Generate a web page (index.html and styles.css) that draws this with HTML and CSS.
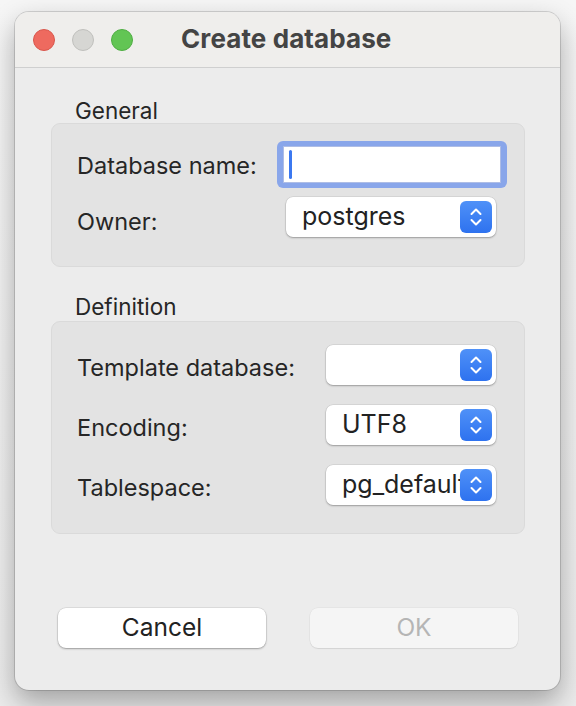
FILE: index.html
```html
<!DOCTYPE html>
<html>
<head>
<meta charset="utf-8">
<link rel="stylesheet" href="styles.css">
</head>
<body>
<div class="window">
  <div class="titlebar">
    <div class="lights">
      <span class="light red"></span>
      <span class="light grey"></span>
      <span class="light green"></span>
    </div>
    <div class="title">Create database</div>
  </div>
  <div class="content">
    <div class="section-label">General</div>
    <div class="group group-general">
      <div class="row row-name">
        <span class="label">Database name:</span>
        <div class="focus-ring"><div class="field"><span class="caret"></span></div></div>
      </div>
      <div class="row row-owner">
        <span class="label">Owner:</span>
        <div class="popup wide"><span class="value">postgres</span><span class="stepper"><svg width="32" height="32" viewBox="0 0 32 32"><path d="M11.5 13 L16 8.5 L20.5 13" fill="none" stroke="#fff" stroke-width="2" stroke-linecap="round" stroke-linejoin="round"/><path d="M11.5 19 L16 23.5 L20.5 19" fill="none" stroke="#fff" stroke-width="2" stroke-linecap="round" stroke-linejoin="round"/></svg></span></div>
      </div>
    </div>
    <div class="section-label second">Definition</div>
    <div class="group group-def">
      <div class="row">
        <span class="label">Template database:</span>
        <div class="popup narrow"><span class="value"></span><span class="stepper"><svg width="32" height="32" viewBox="0 0 32 32"><path d="M11.5 13 L16 8.5 L20.5 13" fill="none" stroke="#fff" stroke-width="2" stroke-linecap="round" stroke-linejoin="round"/><path d="M11.5 19 L16 23.5 L20.5 19" fill="none" stroke="#fff" stroke-width="2" stroke-linecap="round" stroke-linejoin="round"/></svg></span></div>
      </div>
      <div class="row">
        <span class="label">Encoding:</span>
        <div class="popup narrow"><span class="value">UTF8</span><span class="stepper"><svg width="32" height="32" viewBox="0 0 32 32"><path d="M11.5 13 L16 8.5 L20.5 13" fill="none" stroke="#fff" stroke-width="2" stroke-linecap="round" stroke-linejoin="round"/><path d="M11.5 19 L16 23.5 L20.5 19" fill="none" stroke="#fff" stroke-width="2" stroke-linecap="round" stroke-linejoin="round"/></svg></span></div>
      </div>
      <div class="row">
        <span class="label">Tablespace:</span>
        <div class="popup narrow"><span class="value">pg_default</span><span class="stepper"><svg width="32" height="32" viewBox="0 0 32 32"><path d="M11.5 13 L16 8.5 L20.5 13" fill="none" stroke="#fff" stroke-width="2" stroke-linecap="round" stroke-linejoin="round"/><path d="M11.5 19 L16 23.5 L20.5 19" fill="none" stroke="#fff" stroke-width="2" stroke-linecap="round" stroke-linejoin="round"/></svg></span></div>
      </div>
    </div>
    <div class="buttons">
      <div class="btn cancel">Cancel</div>
      <div class="btn ok">OK</div>
    </div>
  </div>
</div>
</body>
</html>
```
FILE: styles.css
```css
html, body {
  margin: 0;
  padding: 0;
}
body {
  width: 576px;
  height: 706px;
  overflow: hidden;
  background: linear-gradient(#f6f6f6, #ececec);
  font-family: Inter, "Open Sans", "Liberation Sans", sans-serif;
  color: #262626;
}
.window {
  margin: 12px 0 0 15px;
  width: 545px;
  height: 678px;
  background: #ececec;
  border-radius: 14px;
  box-shadow: 0 0 0 1px rgba(0,0,0,0.14), 0 12px 28px rgba(0,0,0,0.32);
  overflow: hidden;
  display: flex;
  flex-direction: column;
}
.titlebar {
  height: 55px;
  background: #efeeec;
  border-bottom: 1px solid #cfcfcf;
  display: flex;
  align-items: center;
}
.lights {
  display: flex;
  gap: 17px;
  margin-left: 18px;
  margin-top: 1px;
}
.light {
  width: 22px;
  height: 22px;
  border-radius: 50%;
  box-sizing: border-box;
}
.red { background: #ee6a5f; border: 1px solid #d9564c; }
.grey { background: #d6d6d3; border: 1px solid #c0c0bd; }
.green { background: #62c554; border: 1px solid #4fae43; }
.title {
  margin-left: 48px;
  font-size: 26px;
  line-height: 30px;
  font-weight: 700;
  color: #444;
  letter-spacing: 0.1px;
  margin-top: -2px;
}
.content {
  padding: 30px 35px 0 36px;
  display: flex;
  flex-direction: column;
}
.section-label {
  font-size: 22.5px;
  line-height: 25px;
  margin-left: 24px;
  color: #262626;
}
.section-label.second {
  margin-top: 27px;
  margin-bottom: 2px;
}
.group {
  background: #e3e3e3;
  border: 1px solid #dadada;
  border-radius: 9px;
  box-sizing: border-box;
  padding: 0 28px 0 25px;
  display: flex;
  flex-direction: column;
}
.group-general {
  height: 144px;
  padding-top: 17px;
  gap: 9px;
}
.group-def {
  height: 213px;
  padding-top: 23px;
  gap: 20px;
}
.group-def .label {
  padding-top: 6px;
}
.row {
  display: flex;
  align-items: center;
  justify-content: space-between;
}
.label {
  font-size: 23.5px;
  line-height: 28px;
  color: #262626;
  white-space: nowrap;
}
.row-name .label { padding-top: 3px; }
.row-owner .label { padding-top: 10px; }
.focus-ring {
  width: 230px;
  height: 47px;
  box-sizing: border-box;
  padding: 5px 6px;
  background: #89a6ea;
  border-radius: 6px;
  margin-right: -11px;
}
.field {
  background: #fff;
  height: 37px;
  box-sizing: border-box;
  border: 1px solid #aebde6;
  display: flex;
  align-items: center;
  padding-left: 5px;
}
.caret {
  width: 3px;
  height: 29px;
  background: #3b78f0;
  border-radius: 2px;
}
.popup {
  height: 40px;
  background: #fff;
  border-radius: 7px;
  box-shadow: 0 0 0 0.5px rgba(0,0,0,0.1), 0 1px 2px rgba(0,0,0,0.28);
  display: flex;
  align-items: center;
  box-sizing: border-box;
  padding-left: 16px;
  padding-right: 4px;
}
.popup.wide { width: 210px; }
.popup.narrow { width: 170px; }
.value {
  flex: 1;
  min-width: 0;
  font-size: 25px;
  line-height: 30px;
  color: #222;
  white-space: nowrap;
  overflow: hidden;
  margin-top: -3px;
}
.stepper {
  width: 32px;
  height: 32px;
  flex: none;
  border-radius: 6px;
  background: linear-gradient(#4f91f8, #2e72ef);
  display: flex;
}
.buttons {
  margin-top: 74px;
  display: flex;
  justify-content: space-between;
  padding: 0 7px 0 7px;
}
.btn {
  width: 208px;
  height: 40px;
  border-radius: 8px;
  display: flex;
  align-items: center;
  justify-content: center;
  font-size: 24.5px;
  line-height: 30px;
  box-sizing: border-box;
  padding-bottom: 2px;
}
.cancel {
  background: #fff;
  color: #222;
  box-shadow: 0 0 0 0.5px rgba(0,0,0,0.12), 0 1px 2px rgba(0,0,0,0.3);
}
.ok {
  background: #f5f5f5;
  color: #b5b5b5;
  box-shadow: 0 0 0 0.5px rgba(0,0,0,0.06), 0 1px 1px rgba(0,0,0,0.08);
}
```
